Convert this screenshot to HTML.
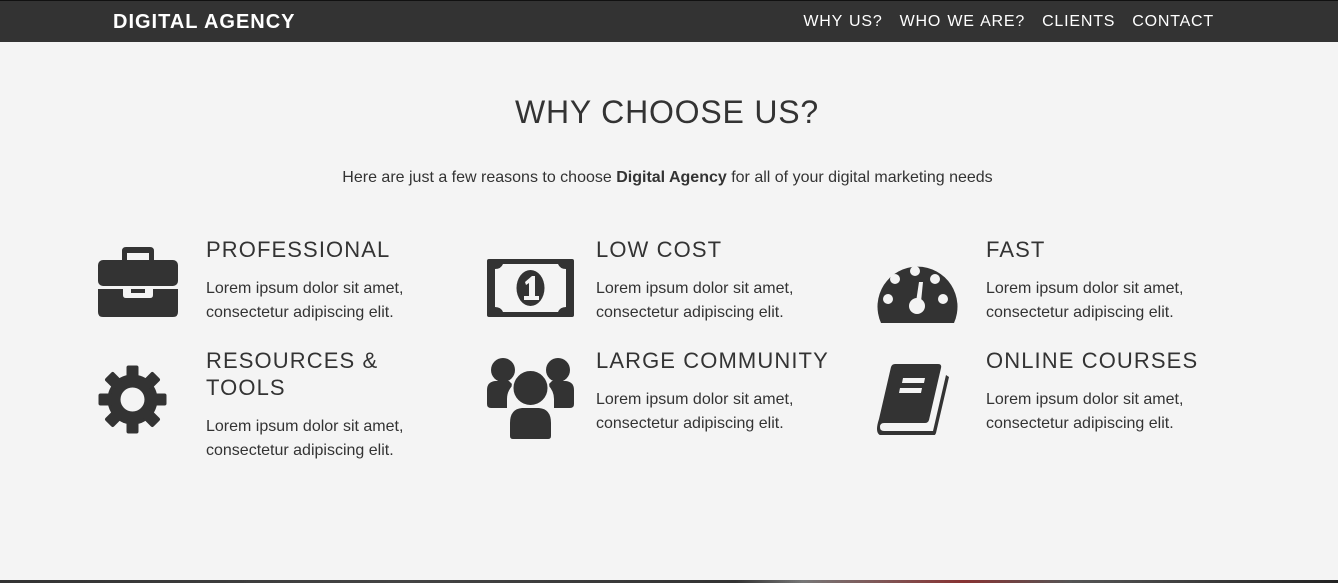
<!DOCTYPE html>
<html><head><style>
*{margin:0;padding:0;box-sizing:border-box}
body{width:1338px;height:583px;overflow:hidden;background:#f4f4f4;font-family:"Liberation Sans",Arial,sans-serif;color:#333;position:relative}
.nav{position:absolute;left:0;top:0;width:1338px;height:42px;background:#333;border-top:1px solid #111}
.logo{position:absolute;left:113px;top:10px;color:#fff;font-weight:bold;font-size:20px;letter-spacing:1px}
.links{position:absolute;right:124px;top:12px;color:#fff;font-size:16px;letter-spacing:.8px;word-spacing:1px}
.links span{margin-left:17px}
h1{position:absolute;left:0;width:1338px;top:94px;text-align:center;font-weight:normal;font-size:32px;letter-spacing:.8px;padding-right:4px}
.sub{position:absolute;left:0;width:1338px;top:169px;text-align:center;font-size:16px;padding-right:3px}
.it{position:absolute;width:300px}
.it h3{font-weight:normal;font-size:22px;letter-spacing:1.1px;line-height:27px;margin-bottom:14px}
.it p{font-size:16px;line-height:24px}
svg{position:absolute}
.bot{position:absolute;left:0;top:580px;width:1338px;height:3px;background:linear-gradient(90deg,#333,#444 30%,#333 55%,#777 60%,#833 72%,#555 80%,#222)}
</style></head><body>
<div class="nav"><div class="logo">DIGITAL AGENCY</div>
<div class="links"><span>WHY US?</span><span>WHO WE ARE?</span><span>CLIENTS</span><span>CONTACT</span></div></div>
<h1>WHY CHOOSE US?</h1>
<div class="sub">Here are just a few reasons to choose <b>Digital Agency</b> for all of your digital marketing needs</div>

<svg style="left:98px;top:247px" width="80" height="71" viewBox="0 0 80 71"><path d="M24 13V4q0-4 4-4h24q4 0 4 4v9h-5V6H29v7z" fill="#333"/><rect x="0" y="13" width="80" height="26" rx="5" fill="#333"/><path d="M0 42h25v6q0 3 3 3h24q3 0 3-3v-6h25v23q0 5-5 5H5q-5 0-5-5z" fill="#333"/><rect x="33" y="42" width="14" height="4" fill="#333"/></svg>
<div class="it" style="left:206px;top:236px"><h3>PROFESSIONAL</h3><p>Lorem ipsum dolor sit amet,<br>consectetur adipiscing elit.</p></div>

<svg style="left:487px;top:259px" width="87" height="58" viewBox="0 0 87 58"><rect width="87" height="58" rx="2" fill="#333"/><path d="M8 10q6 0 8-5h55q2 5 8 5v38q-6 0-8 5H16q-2-5-8-5z" fill="#f4f4f4"/><ellipse cx="43.5" cy="29" rx="14" ry="18" fill="#333"/><path d="M38 23l7-6h3v20h4v4H37v-4h5V24l-3 2z" fill="#f4f4f4"/></svg>
<div class="it" style="left:596px;top:236px"><h3>LOW COST</h3><p>Lorem ipsum dolor sit amet,<br>consectetur adipiscing elit.</p></div>

<svg style="left:877px;top:259px" width="81" height="64" viewBox="0 0 81 64"><path d="M4 64A40 40 0 1 1 77 64z" fill="#333"/><g fill="#f4f4f4"><circle cx="38" cy="12" r="5"/><circle cx="18" cy="20" r="5"/><circle cx="58" cy="20" r="5"/><circle cx="11" cy="40" r="5"/><circle cx="66" cy="40" r="5"/><circle cx="40" cy="47" r="8"/><path d="M39 43l3-20h4l-2 20z"/></g></svg>
<div class="it" style="left:986px;top:236px"><h3>FAST</h3><p>Lorem ipsum dolor sit amet,<br>consectetur adipiscing elit.</p></div>

<svg style="left:98px;top:365px" width="69" height="69" viewBox="0 0 69 69"><g fill="#333" transform="translate(34.5 34.5)"><circle r="25"/><g id="t"><rect x="-6" y="-34" width="12" height="14" rx="2"/></g><use href="#t" transform="rotate(45)"/><use href="#t" transform="rotate(90)"/><use href="#t" transform="rotate(135)"/><use href="#t" transform="rotate(180)"/><use href="#t" transform="rotate(225)"/><use href="#t" transform="rotate(270)"/><use href="#t" transform="rotate(315)"/></g><circle cx="34.5" cy="34.5" r="12" fill="#f4f4f4"/></svg>
<div class="it" style="left:206px;top:347px"><h3>RESOURCES &amp;<br>TOOLS</h3><p>Lorem ipsum dolor sit amet,<br>consectetur adipiscing elit.</p></div>

<svg style="left:487px;top:358px" width="87" height="82" viewBox="0 0 87 82"><g fill="#333"><circle cx="16" cy="12" r="12"/><circle cx="71" cy="12" r="12"/><path d="M0 32q0-8 8-9h14l4 4q-6 6-6 14v9H4q-4 0-4-4z"/><path d="M87 32q0-8-8-9H65l-4 4q6 6 6 14v9h16q4 0 4-4z"/><circle cx="43.5" cy="30" r="18" stroke="#f4f4f4" stroke-width="2"/><path d="M22 78V65q0-15 13-16h17q13 1 13 16v13q0 4-4 4H26q-4 0-4-4z" stroke="#f4f4f4" stroke-width="2"/></g></svg>
<div class="it" style="left:596px;top:347px"><h3>LARGE COMMUNITY</h3><p>Lorem ipsum dolor sit amet,<br>consectetur adipiscing elit.</p></div>

<svg style="left:877px;top:364px" width="76" height="71" viewBox="0 0 76 71"><path d="M14 3q1-3 4-3h43q4 0 3 4L52 56q-1 3-4 3H7q-4 0-4 4t4 4h49l13-56 3 2-13 56q-1 3-4 3H7q-7 0-7-7 0-4 2-10z" fill="#333"/><g fill="#f4f4f4"><path d="M26 14h22l-1 5H25z"/><path d="M23 24h22l-1 5H22z"/></g></svg>
<div class="it" style="left:986px;top:347px"><h3>ONLINE COURSES</h3><p>Lorem ipsum dolor sit amet,<br>consectetur adipiscing elit.</p></div>
<div class="bot"></div>
</body></html>
